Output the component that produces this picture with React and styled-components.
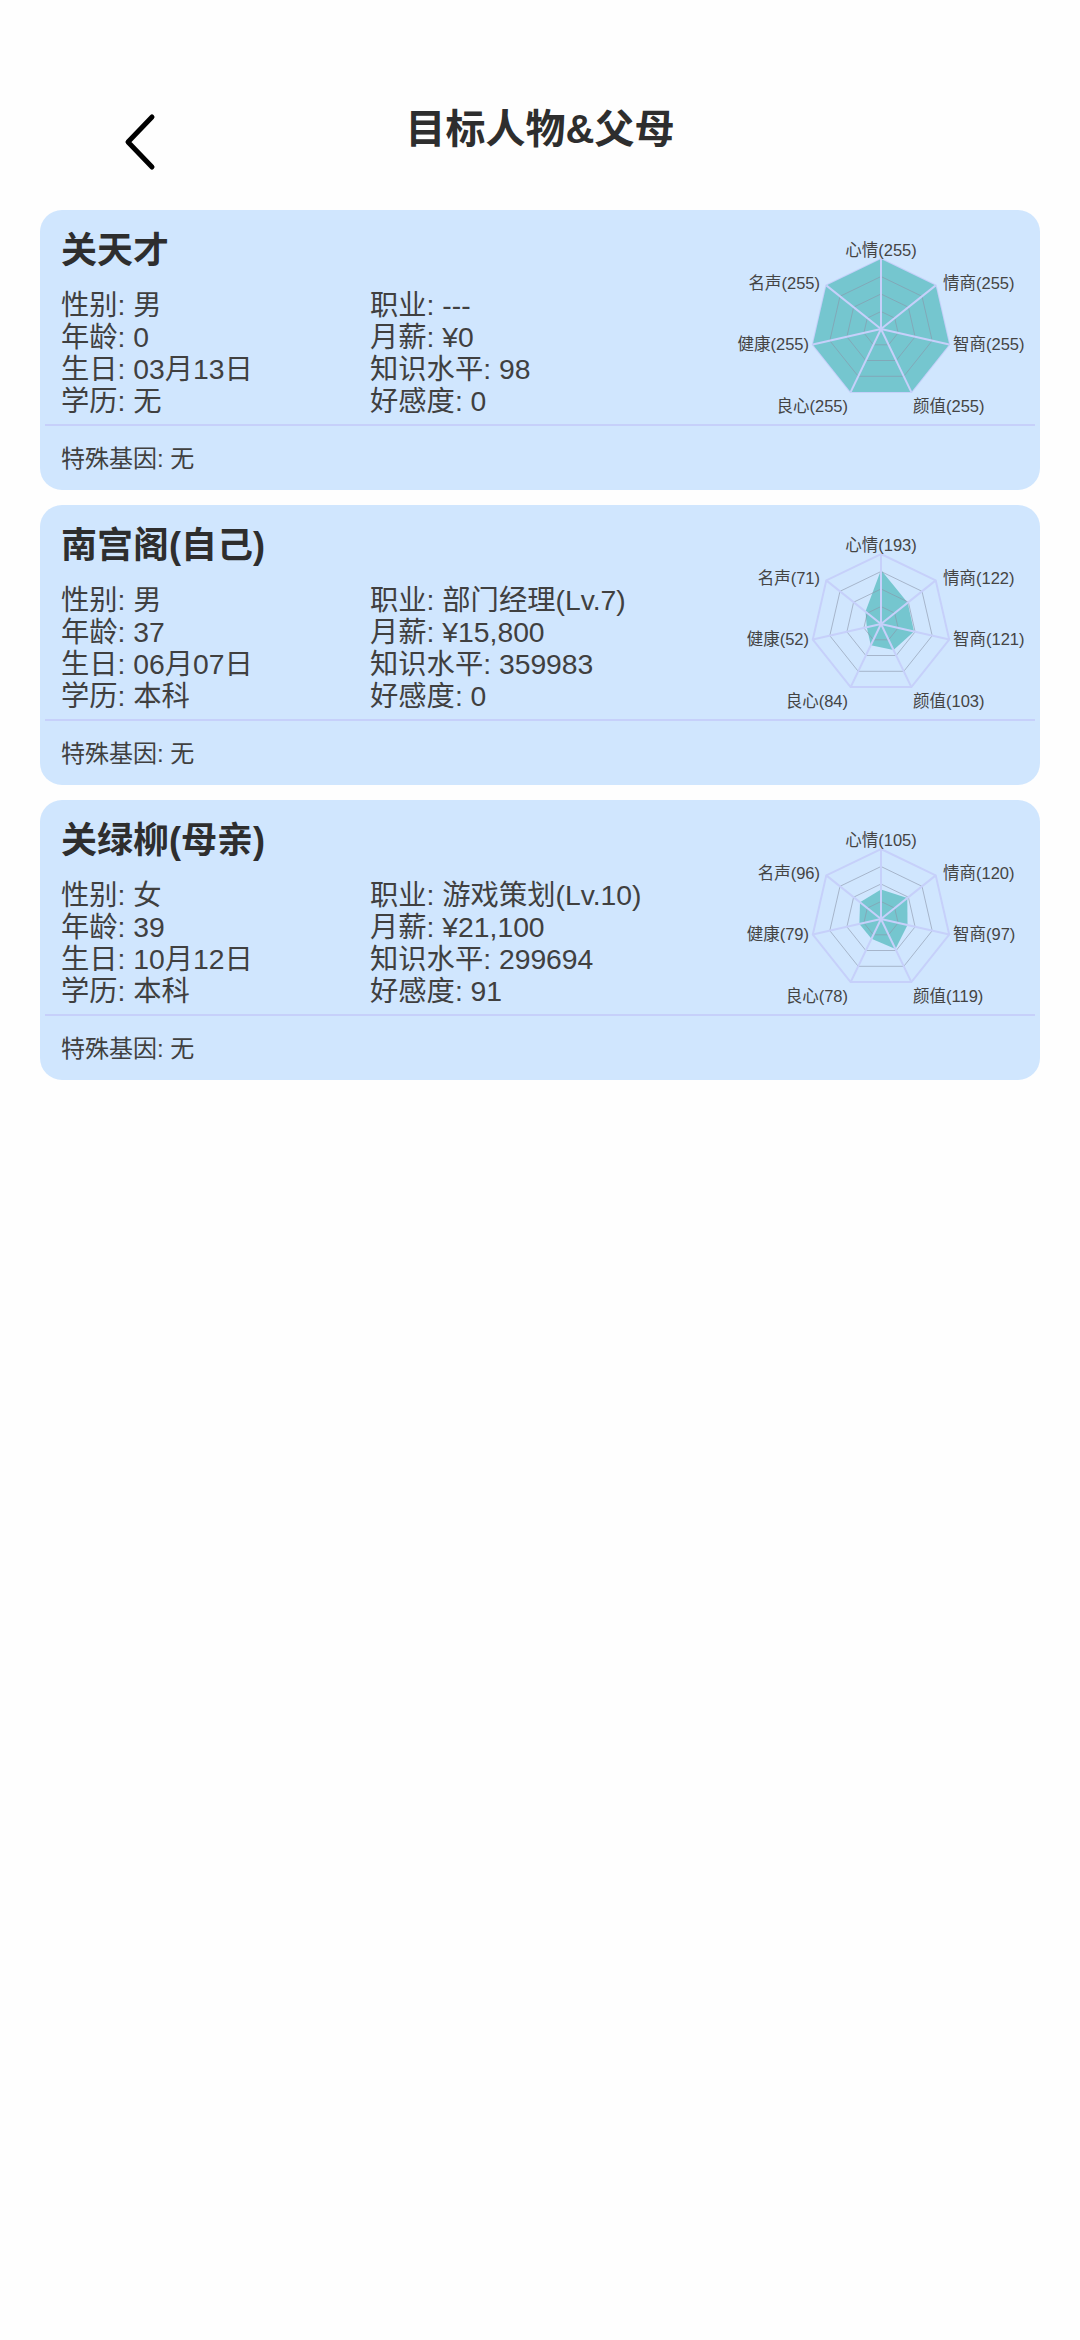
import React from 'react';
import styled, { createGlobalStyle } from 'styled-components';

const GlobalStyle = createGlobalStyle`
  html, body {
    margin: 0;
    padding: 0;
    background: #fefefe;
    font-family: "Liberation Sans", "Noto Sans CJK SC", sans-serif;
    color: #333;
  }
`;

const Page = styled.div`
  width: 1080px;
  min-height: 2340px;
  padding: 0 40px;
  box-sizing: border-box;
`;

const Header = styled.header`
  display: grid;
  grid-template-columns: 1fr auto 1fr;
  height: 210px;
`;

const BackButton = styled.button`
  justify-self: start;
  align-self: start;
  margin: 113px 0 0 81px;
  padding: 0;
  width: 36px;
  height: 58px;
  border: 0;
  background: none;
`;

const Title = styled.h1`
  grid-column: 2;
  margin: 105px 0 0;
  font-size: 40px;
  line-height: 48px;
  font-weight: 700;
  color: #2e2e2e;
`;

const CardList = styled.div`
  display: flex;
  flex-direction: column;
  gap: 15px;
`;

const Card = styled.section`
  height: 280px;
  padding: 0 5px;
  box-sizing: border-box;
  background: #d0e6fe;
  border-radius: 22px;
`;

const CardTop = styled.div`
  display: flex;
  justify-content: space-between;
  height: 214px;
  border-bottom: 2px solid #c6d0fa;
`;

const Info = styled.div`
  padding: 20px 0 0 16px;
`;

const Name = styled.h2`
  margin: 0 0 17px;
  font-size: 36px;
  line-height: 42px;
  font-weight: 700;
  color: #2e2e2e;
`;

const Fields = styled.div`
  display: grid;
  grid-template-columns: 309px 300px;
  font-size: 28.3px;
  line-height: 32px;
  color: #404040;
`;

const Chart = styled.svg`
  display: block;
  flex: none;
  width: 315px;
  height: 214px;
`;

const ChartLabel = styled.text`
  font-size: 16.5px;
  fill: #444;
`;

const Gene = styled.div`
  padding: 19px 0 0 16px;
  font-size: 24px;
  line-height: 28px;
  color: #404040;
`;

const CX = 161;
const CY = 119;
const R = 70;

const LABELS = [
  { name: '心情', x: 161, y: 46, anchor: 'middle' },
  { name: '情商', x: 223, y: 79, anchor: 'start' },
  { name: '智商', x: 233, y: 140, anchor: 'start' },
  { name: '颜值', x: 193, y: 202, anchor: 'start' },
  { name: '良心', x: 128, y: 202, anchor: 'end' },
  { name: '健康', x: 89, y: 140, anchor: 'end' },
  { name: '名声', x: 100, y: 79, anchor: 'end' },
];

const point = (i, r) => {
  const angle = (i * 2 * Math.PI) / 7;
  return [CX + r * Math.sin(angle), CY - r * Math.cos(angle)];
};

const ring = (getR) => LABELS.map((_, i) => point(i, getR(i)).map((n) => n.toFixed(1)).join(',')).join(' ');

const Radar = ({ stats }) => (
  <Chart viewBox="0 0 315 214">
    <polygon points={ring(() => R)} fill="none" stroke="#c6d0fa" strokeWidth="2" />
    <polygon points={ring((i) => Math.min(1, stats[i] / 250) * R)} fill="#75c6cf" />
    {[0.25, 0.5, 0.75].map((k) => (
      <polygon key={k} points={ring(() => R * k)} fill="none" stroke="#8994a8" strokeWidth="0.6" />
    ))}
    {LABELS.map((_, i) => {
      const [x, y] = point(i, R);
      return <line key={i} x1={CX} y1={CY} x2={x} y2={y} stroke="#c6d0fa" strokeWidth="2" />;
    })}
    {LABELS.map((l, i) => (
      <ChartLabel key={l.name} x={l.x} y={l.y} textAnchor={l.anchor}>
        {l.name}({stats[i]})
      </ChartLabel>
    ))}
  </Chart>
);

const people = [
  {
    name: '关天才',
    fields: ['性别: 男', '职业: ---', '年龄: 0', '月薪: ¥0', '生日: 03月13日', '知识水平: 98', '学历: 无', '好感度: 0'],
    stats: [255, 255, 255, 255, 255, 255, 255],
  },
  {
    name: '南宫阁(自己)',
    fields: ['性别: 男', '职业: 部门经理(Lv.7)', '年龄: 37', '月薪: ¥15,800', '生日: 06月07日', '知识水平: 359983', '学历: 本科', '好感度: 0'],
    stats: [193, 122, 121, 103, 84, 52, 71],
  },
  {
    name: '关绿柳(母亲)',
    fields: ['性别: 女', '职业: 游戏策划(Lv.10)', '年龄: 39', '月薪: ¥21,100', '生日: 10月12日', '知识水平: 299694', '学历: 本科', '好感度: 91'],
    stats: [105, 120, 97, 119, 78, 79, 96],
  },
];

const App = () => (
  <Page>
    <GlobalStyle />
    <Header>
      <BackButton aria-label="返回">
        <svg width="36" height="58" viewBox="0 0 36 58" fill="none">
          <path d="M31 4 L7 29 L31 54" stroke="#000" strokeWidth="5" strokeLinecap="round" strokeLinejoin="round" />
        </svg>
      </BackButton>
      <Title>目标人物&父母</Title>
    </Header>
    <CardList>
      {people.map((p) => (
        <Card key={p.name}>
          <CardTop>
            <Info>
              <Name>{p.name}</Name>
              <Fields>
                {p.fields.map((f) => (
                  <div key={f}>{f}</div>
                ))}
              </Fields>
            </Info>
            <Radar stats={p.stats} />
          </CardTop>
          <Gene>特殊基因: 无</Gene>
        </Card>
      ))}
    </CardList>
  </Page>
);

export default App;
